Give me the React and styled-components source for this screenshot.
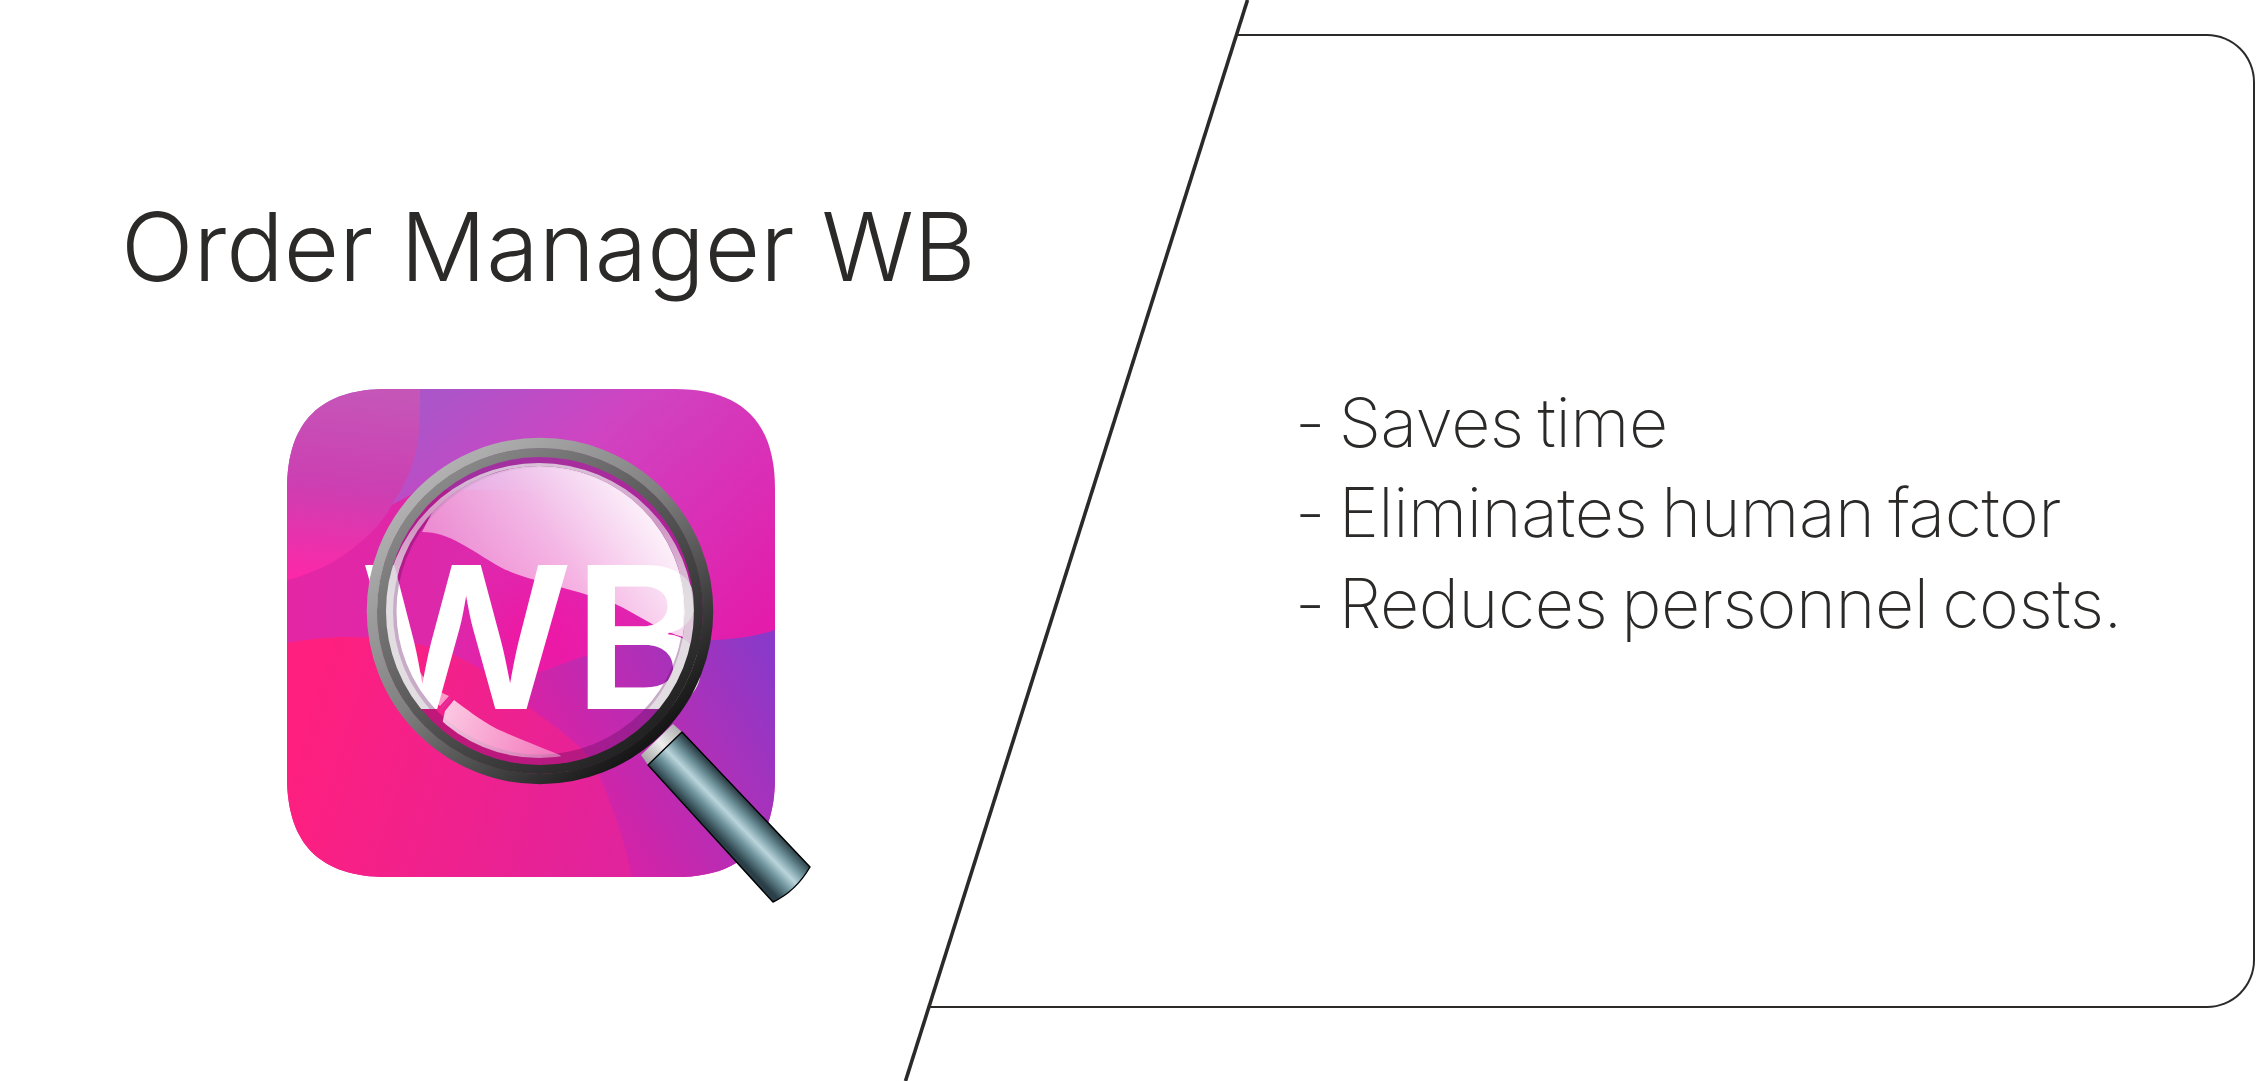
import React from "react";
import styled, { createGlobalStyle } from "styled-components";

const Global = createGlobalStyle`
  html, body { margin: 0; padding: 0; background: #fff; }
  body { font-family: Inter, "Liberation Sans", sans-serif; color: #2b2a29; }
`;

const Page = styled.main`
  position: relative;
  display: flex;
  width: 2256px;
  height: 1081px;
  overflow: hidden;
  background: #fff;
`;

const Intro = styled.section`
  flex: 0 0 900px;
  min-width: 0;
  box-sizing: border-box;
  padding: 187px 0 0 121px;
  display: flex;
  flex-direction: column;
`;

const Title = styled.h1`
  margin: 0;
  font-size: 95.5px;
  line-height: 118px;
  font-weight: 300;
  letter-spacing: 0;
  white-space: nowrap;
  color: #2b2a29;
`;

const Logo = styled.svg`
  display: block;
  width: 540px;
  height: 530px;
  margin: 75px 0 0 159px;
`;

const Panel = styled.section`
  flex: 1;
  box-sizing: border-box;
  margin: 34px 1px 73px 0;
  padding: 0 0 17px 395px;
  display: flex;
  flex-direction: column;
  justify-content: center;
  border: 2px solid #2b2a29;
  border-left: 0;
  border-radius: 0 48px 48px 0;
  clip-path: polygon(337px 0, 100% 0, 100% 100%, 30px 100%);
`;

const Benefit = styled.p`
  margin: 0;
  font-size: 68px;
  line-height: 90.5px;
  font-weight: 250;
  letter-spacing: -0.4px;
  word-spacing: -5px;
  white-space: nowrap;
  color: #2b2a29;
`;

const Slash = styled.svg`
  position: absolute;
  inset: 0;
  width: 2256px;
  height: 1081px;
  pointer-events: none;
`;

const SQUIRCLE =
  "M387 389H675C742 389 775 422 775 489V777C775 844 742 877 675 877H387C320 877 287 844 287 777V489C287 422 320 389 387 389Z";

const OrderLogo = () => (
  <Logo viewBox="280 380 540 530" aria-label="Order Manager WB logo">
    <defs>
      <clipPath id="squircle">
        <path d={SQUIRCLE} />
      </clipPath>
      <clipPath id="glass">
        <circle cx="540" cy="611" r="156" />
      </clipPath>
      <clipPath id="inner">
        <circle cx="539" cy="612" r="146" />
      </clipPath>
      <clipPath id="aboveBaseline">
        <rect x="370" y="440" width="340" height="269" />
      </clipPath>
      <linearGradient id="base" gradientUnits="userSpaceOnUse" x1="440" y1="389" x2="700" y2="680">
        <stop offset="0" stopColor="#ab55c9" />
        <stop offset="0.35" stopColor="#cf44c2" />
        <stop offset="1" stopColor="#e31cab" />
      </linearGradient>
      <radialGradient id="heart" gradientUnits="userSpaceOnUse" cx="515" cy="640" r="190">
        <stop offset="0" stopColor="#f5109f" stopOpacity="1" />
        <stop offset="1" stopColor="#e31cab" stopOpacity="0" />
      </radialGradient>
      <linearGradient id="corner" gradientUnits="userSpaceOnUse" x1="350" y1="389" x2="330" y2="585">
        <stop offset="0" stopColor="#c556b8" />
        <stop offset="0.5" stopColor="#cc3fb2" />
        <stop offset="1" stopColor="#ff27a8" />
      </linearGradient>
      <linearGradient id="mid" gradientUnits="userSpaceOnUse" x1="290" y1="620" x2="560" y2="620">
        <stop offset="0" stopColor="#e426a4" />
        <stop offset="0.55" stopColor="#dc28aa" />
        <stop offset="1" stopColor="#e027ac" stopOpacity="0" />
      </linearGradient>
      <linearGradient id="violet" gradientUnits="userSpaceOnUse" x1="775" y1="660" x2="570" y2="780">
        <stop offset="0" stopColor="#8a39c9" />
        <stop offset="0.45" stopColor="#ae30b8" />
        <stop offset="1" stopColor="#d722a6" />
      </linearGradient>
      <linearGradient id="rose" gradientUnits="userSpaceOnUse" x1="300" y1="700" x2="630" y2="800">
        <stop offset="0" stopColor="#ff1f7e" />
        <stop offset="1" stopColor="#e1239c" />
      </linearGradient>
      <linearGradient id="ring" gradientUnits="userSpaceOnUse" x1="420" y1="470" x2="670" y2="760">
        <stop offset="0" stopColor="#b5b5b5" />
        <stop offset="0.45" stopColor="#808080" />
        <stop offset="1" stopColor="#060606" />
      </linearGradient>
      <linearGradient id="ringInner" gradientUnits="userSpaceOnUse" x1="420" y1="470" x2="670" y2="760">
        <stop offset="0" stopColor="#8f8f8f" />
        <stop offset="0.5" stopColor="#555" />
        <stop offset="1" stopColor="#161616" />
      </linearGradient>
      <linearGradient id="rim" gradientUnits="userSpaceOnUse" x1="540" y1="463" x2="540" y2="709">
        <stop offset="0" stopColor="#e6e6e6" stopOpacity="0.8" />
        <stop offset="0.25" stopColor="#e6e6e6" stopOpacity="0.6" />
        <stop offset="0.55" stopColor="#e6e6e6" stopOpacity="0.85" />
        <stop offset="1" stopColor="#e6e6e6" stopOpacity="0.85" />
      </linearGradient>
      <linearGradient id="shine" gradientUnits="userSpaceOnUse" x1="660" y1="480" x2="450" y2="610">
        <stop offset="0" stopColor="#fff" stopOpacity="1" />
        <stop offset="0.5" stopColor="#fff" stopOpacity="0.66" />
        <stop offset="1" stopColor="#fff" stopOpacity="0.42" />
      </linearGradient>
      <linearGradient id="glow" gradientUnits="userSpaceOnUse" x1="440" y1="700" x2="570" y2="755">
        <stop offset="0" stopColor="#fff" stopOpacity="0.78" />
        <stop offset="1" stopColor="#fff" stopOpacity="0.35" />
      </linearGradient>
      <linearGradient id="grip" gradientUnits="userSpaceOnUse" x1="648" y1="765" x2="682" y2="732">
        <stop offset="0" stopColor="#2a3f47" />
        <stop offset="0.28" stopColor="#6d929b" />
        <stop offset="0.5" stopColor="#bad5db" />
        <stop offset="0.72" stopColor="#6f939c" />
        <stop offset="1" stopColor="#22343b" />
      </linearGradient>
      <linearGradient id="collar" gradientUnits="userSpaceOnUse" x1="645" y1="760" x2="678" y2="728">
        <stop offset="0" stopColor="#a8a8a8" />
        <stop offset="0.5" stopColor="#eee" />
        <stop offset="1" stopColor="#b0b0b0" />
      </linearGradient>
    </defs>

    <g clipPath="url(#squircle)">
      <rect x="287" y="389" width="488" height="488" fill="url(#base)" />
      <rect x="287" y="389" width="488" height="488" fill="url(#heart)" />
      <path d="M287 560L420 490H560V670H287Z" fill="url(#mid)" />
      <path d="M287 389H420C420 412 420 430 417 447C412 470 405 485 393 503C385 518 375 530 363 540C350 551 338 560 323 567C312 572 300 577 287 580Z" fill="url(#corner)" />
      <path d="M775 630C740 642 690 642 640 640C600 650 540 670 500 690L632 877H775Z" fill="url(#violet)" />
      <path
        d="M287 643C310 639 330 637 347 637C385 637 415 642 440 650C455 655 465 660 477 667C495 678 507 690 519 701C545 718 565 733 582 749C592 760 598 772 604 787C618 820 626 848 632 877H287Z"
        fill="url(#rose)"
      />
    </g>

    <text x="360" y="709" textLength="350" lengthAdjust="spacingAndGlyphs"
      fontFamily="Inter, 'Liberation Sans', sans-serif" fontSize="198" fontWeight="600" fill="#fff">WB</text>

    <path d="M648 765L641 755L673 724L682 732Z" fill="url(#collar)" />
    <path
      d="M682 732L810 867C800 884 788 895 773 902L648 765Z"
      fill="url(#grip)"
      stroke="#000"
      strokeWidth="1.4"
      strokeLinejoin="round"
    />

    <circle cx="540" cy="611" r="150" fill="none" stroke="#5a0a5a" strokeOpacity="0.34" strokeWidth="13" />
    <g clipPath="url(#glass)">
      <g clipPath="url(#inner)">
        <path
          d="M422 532C450 532 470 550 500 567C525 580 560 585 613 603C640 615 660 632 687 638L720 640V440H470Z"
          fill="url(#shine)"
        />
        <path
          d="M445 711L430 780H580L560 755C535 745 515 737 497 729C480 720 465 708 454 700Z"
          fill="url(#glow)"
        />
        <path d="M413 660C420 675 432 690 449 696L440 706C428 695 418 680 413 660Z" fill="#fff" fillOpacity="0.55" />
      </g>
      <line x1="440" y1="710" x2="451" y2="698" stroke="#e2329e" strokeWidth="2" />
      <g clipPath="url(#aboveBaseline)">
        <path
          fillRule="evenodd"
          d="M384 618A155 155 0 1 1 694 618A155 155 0 1 1 384 618ZM393 612A146 146 0 1 0 685 612A146 146 0 1 0 393 612Z"
          fill="url(#rim)"
        />
      </g>
    </g>

    <circle cx="540" cy="611" r="168" fill="none" stroke="url(#ring)" strokeWidth="10.5" />
    <circle cx="540" cy="611" r="158.5" fill="none" stroke="url(#ringInner)" strokeWidth="9" />
  </Logo>
);

export default function App() {
  return (
    <Page>
      <Global />
      <Intro>
        <Title>Order Manager WB</Title>
        <OrderLogo />
      </Intro>
      <Panel>
        <Benefit>- Saves time</Benefit>
        <Benefit>- Eliminates human factor</Benefit>
        <Benefit>- Reduces personnel costs.</Benefit>
      </Panel>
      <Slash viewBox="0 0 2256 1081" aria-hidden="true">
        <line x1="1247.5" y1="0" x2="905.5" y2="1081" stroke="#2b2a29" strokeWidth="3.6" />
      </Slash>
    </Page>
  );
}
